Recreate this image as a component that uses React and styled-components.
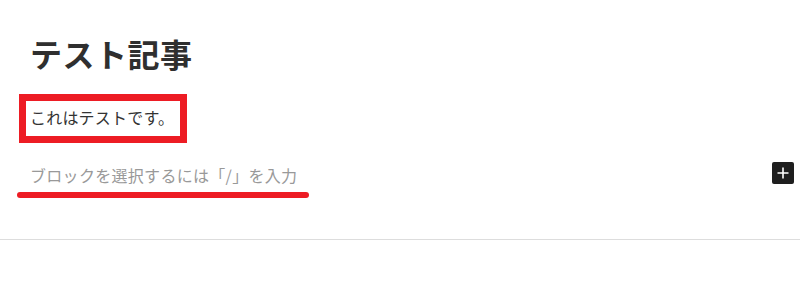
import React from "react";
import styled, { createGlobalStyle } from "styled-components";

const GlobalStyle = createGlobalStyle`
  body {
    margin: 0;
    background: #ffffff;
    font-family: "Noto Sans CJK JP", "Noto Sans", sans-serif;
  }
`;

const Page = styled.div`
  width: 800px;
  height: 303px;
  background: #ffffff;
  display: flex;
  flex-direction: column;
  overflow: hidden;
`;

const Editor = styled.div`
  display: flex;
  flex-direction: column;
  padding: 37px 6px 0 30px;
`;

const Title = styled.h1`
  margin: 0;
  font-size: 32px;
  line-height: 32px;
  height: 32px;
  font-weight: 700;
  color: #2f2f2f;
  letter-spacing: 0.5px;
`;

const Highlight = styled.div`
  align-self: flex-start;
  margin: 25px 0 0 -11px;
  border: 7px solid #ed1c24;
  padding: 4px 6px 7px 4px;
  font-size: 16px;
  line-height: 24px;
  color: #333333;
  letter-spacing: 0.2px;
`;

const BlockRow = styled.div`
  margin-top: 16px;
  height: 28px;
  display: flex;
  align-items: center;
  justify-content: space-between;
`;

const Placeholder = styled.span`
  font-size: 16px;
  line-height: 24px;
  color: #999999;
  padding-top: 3px;
  letter-spacing: 0.3px;
`;

const AddButton = styled.button`
  width: 22px;
  height: 22px;
  padding: 0;
  border: none;
  border-radius: 2px;
  background: #1e1e1e;
  display: flex;
  align-items: center;
  justify-content: center;
  cursor: pointer;
`;

const Underline = styled.div`
  margin: 5px 0 0 -13px;
  width: 292px;
  height: 6px;
  border-radius: 3px;
  background: #ed1c24;
`;

const Divider = styled.hr`
  margin: 41px 0 0;
  border: none;
  border-top: 1px solid #dddddd;
  width: 100%;
`;

export default function App() {
  return (
    <Page>
      <GlobalStyle />
      <Editor>
        <Title>テスト記事</Title>
        <Highlight>これはテストです。</Highlight>
        <BlockRow>
          <Placeholder>ブロックを選択するには「/」を入力</Placeholder>
          <AddButton aria-label="ブロックを追加">
            <svg width="14" height="14" viewBox="0 0 14 14">
              <path d="M7 1.5v11M1.5 7h11" stroke="#ffffff" strokeWidth="1.6" />
            </svg>
          </AddButton>
        </BlockRow>
        <Underline />
      </Editor>
      <Divider />
    </Page>
  );
}
